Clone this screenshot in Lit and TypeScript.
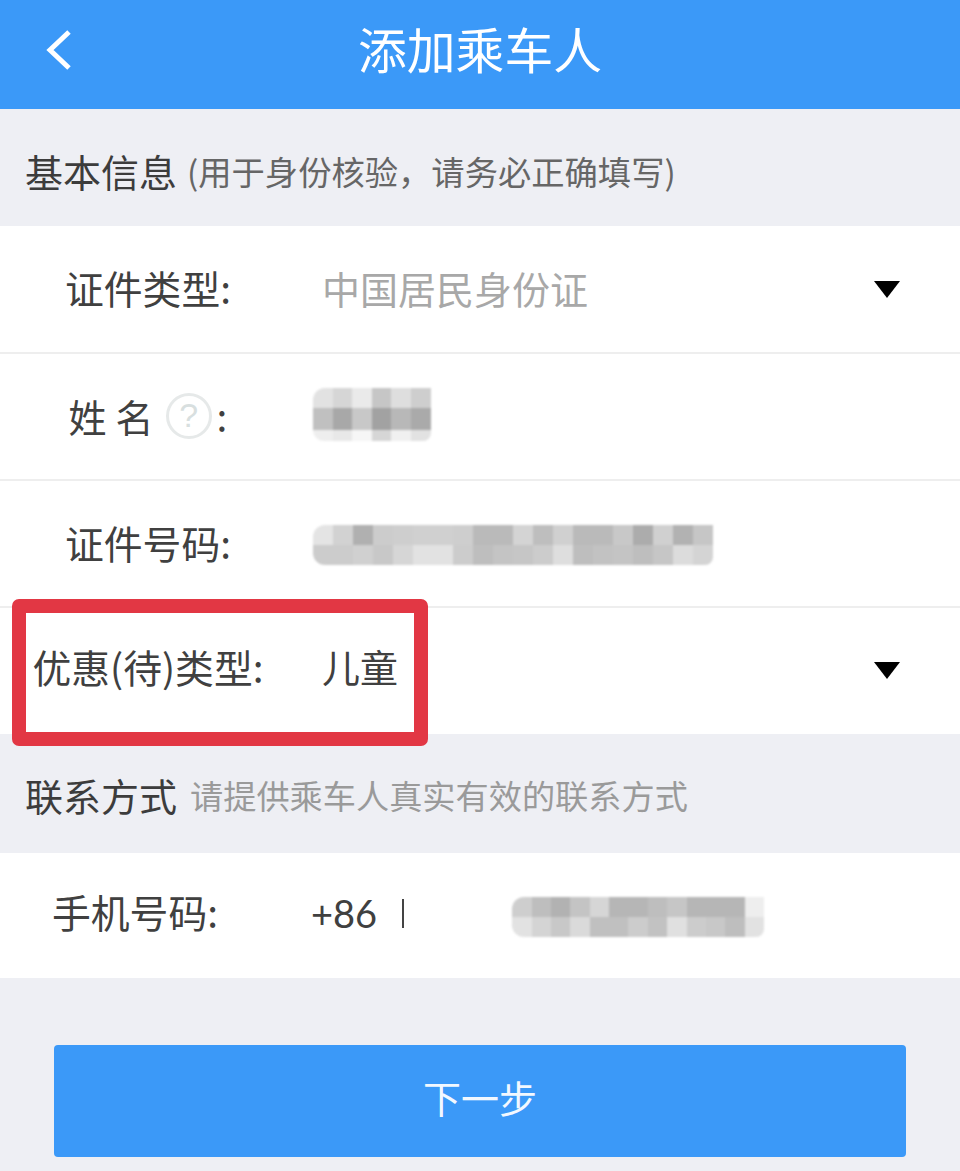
import { LitElement, html, css } from "lit";
import { customElement, property } from "lit/decorators.js";

@customElement("mosaic-block")
class MosaicBlock extends LitElement {
  @property({ type: Array }) rows: number[][] = [];
  @property({ type: Number }) cell = 20;
  @property({ type: Array }) heights: number[] = [];
  static styles = css`
    :host { display: block; filter: blur(0.8px); }
    .row { display: flex; }
    .c { flex: none; }
    .row:first-child .c:first-child { border-top-left-radius: 12px; }
    .row:last-child .c:first-child { border-bottom-left-radius: 12px; }
    .row:last-child .c:last-child { border-bottom-right-radius: 8px; }
  `;
  render() {
    return this.rows.map(
      (r, i) => html`<div class="row">${r.map(
        (v) => html`<div class="c" style="width:${this.cell}px;height:${this.heights[i]}px;background:rgb(${v},${v},${v})"></div>`
      )}</div>`
    );
  }
}

const NAME = [
  [226, 214, 234, 198, 222, 206],
  [192, 168, 200, 162, 184, 170],
  [238, 232, 246, 214, 240, 226],
];
const IDNO = [
  [228, 210, 176, 204, 206, 208, 208, 206, 186, 186, 212, 190, 208, 186, 186, 200, 172, 208, 178, 198],
  [204, 204, 208, 200, 214, 226, 226, 204, 190, 196, 198, 204, 222, 190, 194, 196, 190, 198, 220, 212],
];
const PHONE = [
  [206, 190, 178, 196, 214, 182, 182, 190, 198, 182, 182, 182, 238],
  [226, 212, 200, 218, 192, 192, 204, 194, 224, 204, 200, 190, 226],
];

@customElement("app-root")
class AppRoot extends LitElement {
  static styles = css`
    :host {
      display: block;
      width: 960px;
      height: 1171px;
      overflow: hidden;
      background: #eeeff4;
      font-family: "Noto Sans CJK SC", "Liberation Sans", sans-serif;
      color: #404040;
      position: relative;
    }
    header {
      height: 109px;
      background: #3b99f8;
      display: flex;
      align-items: center;
      justify-content: center;
      position: relative;
      color: #fff;
      font-size: 48.8px;
      line-height: 1;
    }
    header h1 { font: inherit; margin: -12px 0 0; }
    .back { position: absolute; left: 43px; top: 27px; width: 32px; height: 46px; }
    .sec {
      display: flex;
      align-items: center;
      padding-left: 25px;
      font-size: 38px;
      line-height: 1;
      color: #3c3c3c;
    }
    .sec.a { height: 117px; gap: 10px; }
    .sec.a > * { margin-top: 6px; }
    .sec.b { height: 119px; gap: 13px; }
    .sec.b > * { margin-top: 2px; }
    .sec small { font-size: 33.3px; color: #666; }
    .sec.b small { font-size: 33.2px; color: #9a9a9a; }
    .row {
      height: 127px;
      box-sizing: border-box;
      background: #fff;
      display: flex;
      align-items: center;
      border-bottom: 2px solid #eeeeee;
      position: relative;
    }
    .row.first { height: 128px; }
    .row.last { border-bottom: 0; height: 126px; }
    .row.solo { border-bottom: 0; height: 125px; }
    .lab {
      flex: none;
      width: 296px;
      text-align: center;
      font-size: 38.8px;
      line-height: 1;
      white-space: nowrap;
      display: flex;
      align-items: center;
      justify-content: center;
      margin-top: -2px;
    }
    .first > .lab { margin-top: -3px; }
    .first > .val { margin-top: -2px; }
    .first > .caret { margin-top: 1px; }
    .last > .lab, .last > .val { margin-top: -10px; }
    .last > .caret { margin-top: -2px; }
    .val { margin-left: 26px; font-size: 38px; line-height: 1; flex: 1; }
    .val.muted { color: #a8a8a8; }
    .mos { margin-left: 17px; }
    .mos.n { margin-top: -5px; }
    .mos.i { margin-top: 2px; }
    .caret { width: 26px; height: 17px; margin-right: 60px; flex: none; }
    .q {
      width: 46px;
      height: 46px;
      box-sizing: border-box;
      border: 3px solid #e6e9e9;
      border-radius: 50%;
      color: #d8dfdf;
      font-size: 34px;
      line-height: 38px;
      text-align: center;
      margin: 0 5px 0 12px;
      font-family: "Liberation Sans", sans-serif;
    }
    .nm { font-size: 38px; letter-spacing: 9px; margin-right: -9px; }
    .hl {
      position: absolute;
      left: 12px;
      top: -9px;
      width: 416px;
      height: 147px;
      box-sizing: border-box;
      border: 14px solid #e23744;
      border-radius: 7px;
      pointer-events: none;
    }
    .lab.p { width: 270px; margin-top: -8px; }
    .cc { margin-left: 41px; margin-top: -5px; font-size: 38px; line-height: 1; display: flex; align-items: center; font-family: "Lato", "Noto Sans", sans-serif; }
    .bar { width: 2px; height: 29px; background: #444; margin-left: 25px; }
    .phone { margin-left: 108px; margin-top: 2px; }
    .act { padding: 67px 54px 0; }
    button {
      display: block;
      width: 100%;
      height: 112px;
      border: 0;
      border-radius: 4px;
      background: #3b99f8;
      color: #f2f8ff;
      font: inherit;
      font-size: 38px;
      line-height: 1;
      padding: 0 0 8px;
    }
  `;
  render() {
    const caret = html`<svg class="caret" viewBox="0 0 26 17"><path d="M0 0H26L13 17Z" fill="#000"/></svg>`;
    return html`
      <header>
        <svg class="back" viewBox="0 0 32 46"><polyline points="26,5 7,23 26,41" fill="none" stroke="#fff" stroke-width="5"/></svg>
        <h1>添加乘车人</h1>
      </header>
      <div class="sec a"><span>基本信息</span><small>(用于身份核验，请务必正确填写)</small></div>
      <div class="row first"><div class="lab">证件类型:</div><div class="val muted">中国居民身份证</div>${caret}</div>
      <div class="row">
        <div class="lab"><span class="nm">姓名</span><span class="q">?</span><span>:</span></div>
        <mosaic-block class="mos n" .rows=${NAME} .cell=${19.6} .heights=${[20, 22, 11]}></mosaic-block>
      </div>
      <div class="row">
        <div class="lab">证件号码:</div>
        <mosaic-block class="mos i" .rows=${IDNO} .cell=${20} .heights=${[20, 20]}></mosaic-block>
      </div>
      <div class="row last"><div class="lab">优惠(待)类型:</div><div class="val">儿童</div>${caret}<div class="hl"></div></div>
      <div class="sec b"><span>联系方式</span><small>请提供乘车人真实有效的联系方式</small></div>
      <div class="row solo">
        <div class="lab p">手机号码:</div>
        <div class="cc">+86<span class="bar"></span></div>
        <mosaic-block class="phone" .rows=${PHONE} .cell=${19.4} .heights=${[20, 20]}></mosaic-block>
      </div>
      <div class="act"><button>下一步</button></div>
    `;
  }
}
